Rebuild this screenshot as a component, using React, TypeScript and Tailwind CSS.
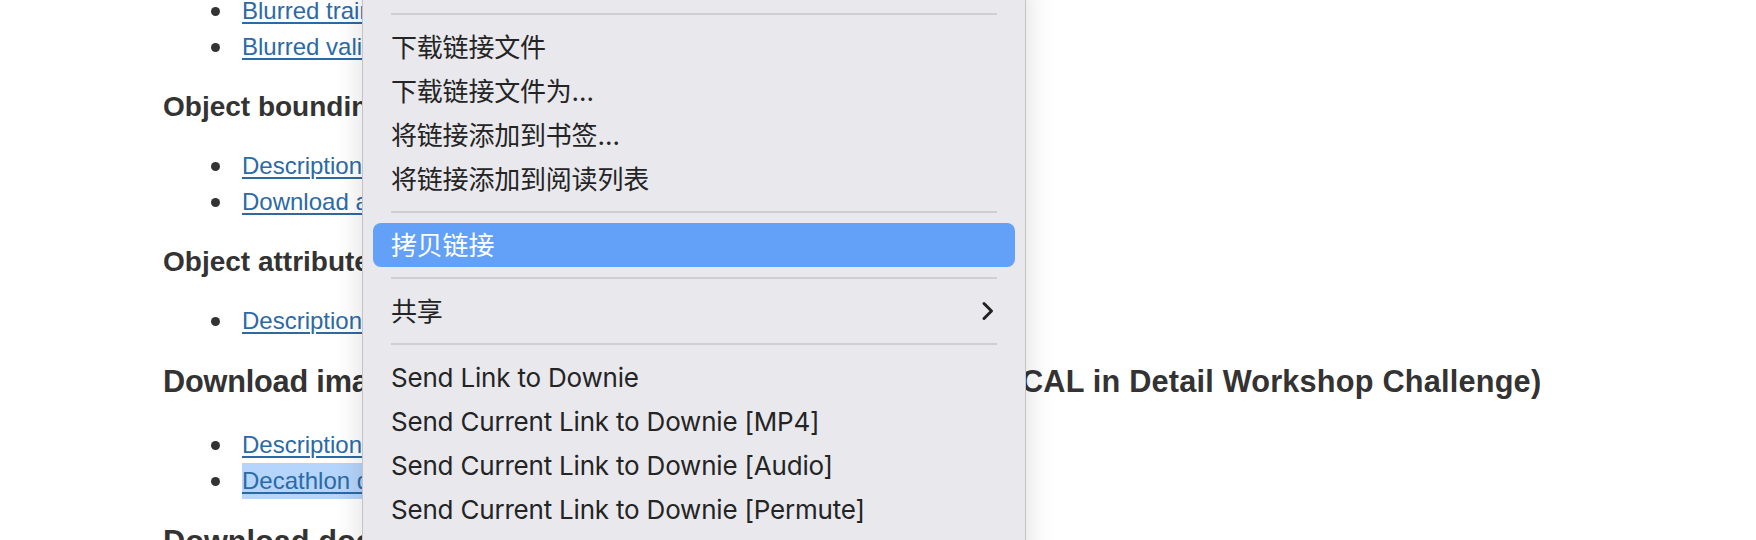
import React from "react";

const linkCls = "text-[#2c6aa6] underline decoration-[2px] underline-offset-[3px]";

function Bullet({children, selected}: {children: React.ReactNode; selected?: boolean}) {
    return (
        <li className="flex h-[36px] items-center">
            <span className="mr-[22px] h-[9px] w-[9px] shrink-0 rounded-full bg-[#333]"></span>
            <a className={linkCls + (selected ? " bg-[#b5d5fc]" : "")}>{children}</a>
        </li>
    );
}

function Sep() {
    return (
        <div className="flex h-[22px] items-center px-[28px]">
            <div className="h-[2px] w-full bg-[#cfcfd3]"></div>
        </div>
    );
}

function Item({label, active, more}: {label: string; active?: boolean; more?: boolean}) {
    return (
        <div
            className={
                "mx-[10px] flex h-[44px] items-center justify-between rounded-[8px] pl-[18px] pr-[20px] " +
                (active ? "bg-[#63a0f8] text-white" : "text-[#242424]")
            }>
            <span>{label}</span>
            {more && (
                <svg width="14" height="22" viewBox="0 0 14 22" fill="none">
                    <path d="M3 3.5 L10.5 11 L3 18.5" stroke="#222" strokeWidth="3" strokeLinecap="round" strokeLinejoin="round"/>
                </svg>
            )}
        </div>
    );
}

export default function App() {
    return (
        <div className="relative h-[540px] w-[1756px] overflow-hidden bg-white">
            {/* page behind the menu */}
            <div className="mt-[-7px] flex flex-col pl-[163px] text-[#333] font-['Liberation_Sans',Arial,sans-serif]">
                <ul className="ml-[48px] text-[24px]">
                    <Bullet>Blurred training images</Bullet>
                    <Bullet>Blurred validation images</Bullet>
                </ul>
                <h3 className="mt-[26px] h-[32px] whitespace-nowrap text-[28px] font-bold leading-[32px]">Object bounding boxes</h3>
                <ul className="ml-[48px] mt-[25px] text-[24px]">
                    <Bullet>Description</Bullet>
                    <Bullet>Download annotations</Bullet>
                </ul>
                <h3 className="mt-[26px] h-[32px] whitespace-nowrap text-[28px] font-bold leading-[32px]">Object attributes</h3>
                <ul className="ml-[48px] mt-[25px] text-[24px]">
                    <Bullet>Description</Bullet>
                </ul>
                <h2 className="mt-[25px] h-[36px] whitespace-nowrap text-[30.7px] font-bold leading-[36px]">
                    <span className="tracking-[-0.2px]">Download images (as used in the visual Decathlon and PAS</span>
                    <span className="tracking-[0.2px]">CAL in Detail Workshop Challenge)</span>
                </h2>
                <ul className="ml-[48px] mt-[27px] text-[24px]">
                    <Bullet>Description</Bullet>
                    <Bullet selected>Decathlon data</Bullet>
                </ul>
                <h2 className="mt-[25px] h-[36px] whitespace-nowrap text-[30.7px] font-bold leading-[36px]">Download documents</h2>
            </div>

            {/* context menu */}
            <div className="absolute left-[362px] top-[-20px] h-[600px] w-[664px] rounded-[12px] border border-[#c4c4c8] bg-[#e8e8ed] pt-[22px] text-[26px] tracking-[-0.2px] shadow-[0_0_30px_rgba(0,0,0,0.14)] font-['Inter','Noto_Sans_CJK_SC',sans-serif]">
                <Sep/>
                <Item label="下载链接文件"/>
                <Item label="下载链接文件为…"/>
                <Item label="将链接添加到书签…"/>
                <Item label="将链接添加到阅读列表"/>
                <Sep/>
                <Item label="拷贝链接" active/>
                <Sep/>
                <Item label="共享" more/>
                <Sep/>
                <Item label="Send Link to Downie"/>
                <Item label="Send Current Link to Downie [MP4]"/>
                <Item label="Send Current Link to Downie [Audio]"/>
                <Item label="Send Current Link to Downie [Permute]"/>
            </div>
        </div>
    );
}
